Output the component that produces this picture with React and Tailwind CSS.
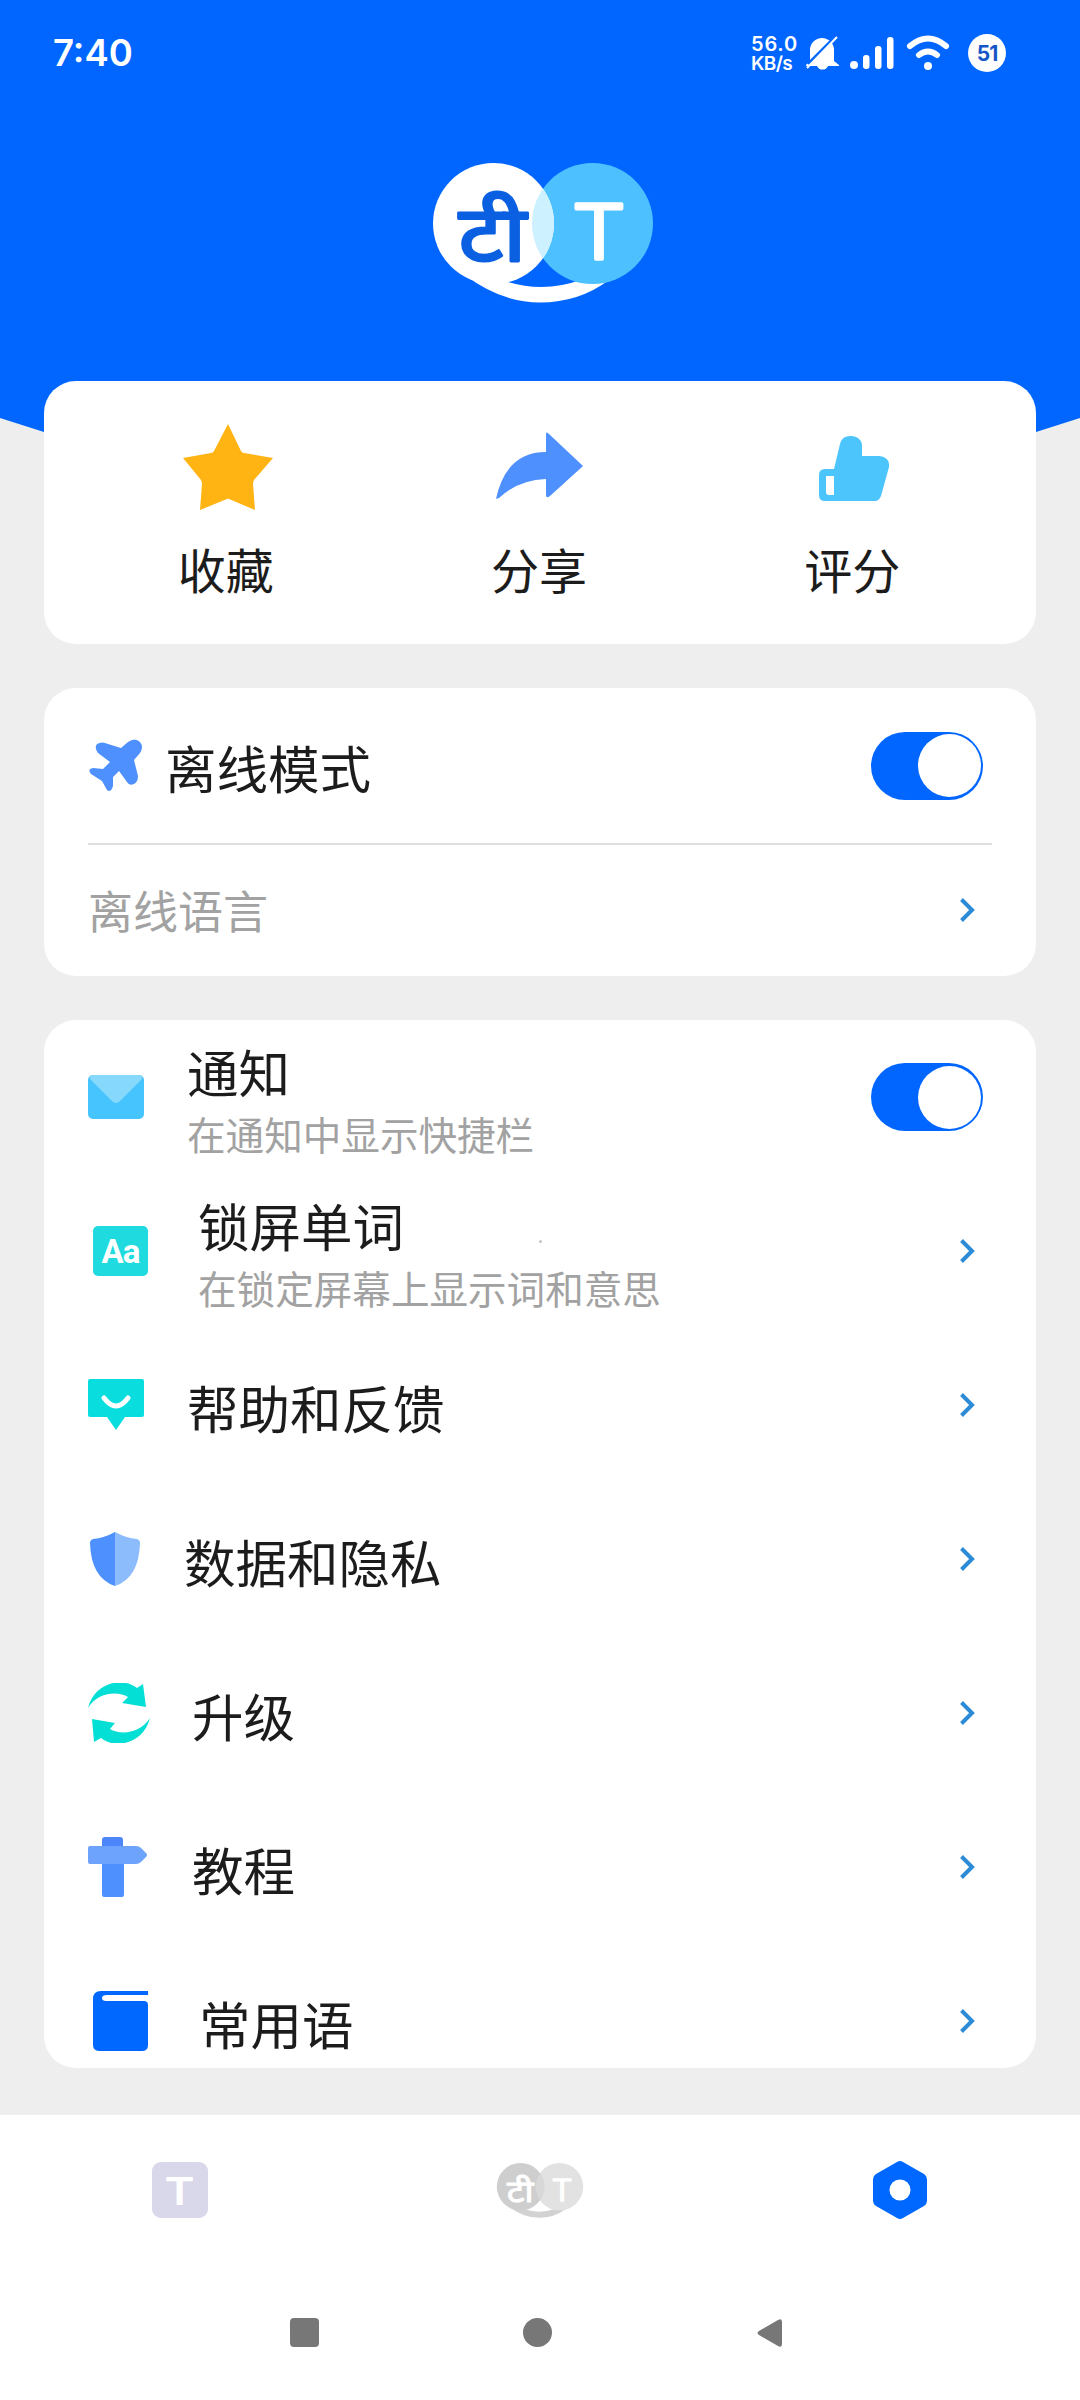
// ============================================================
//  App.jsx — Translator settings screen
//
//  Status bar + brand header, quick actions, offline card,
//  settings list, tab bar and the system navigation.
// ============================================================

import React from "react";

/* ---------- Brand mark ---------- */

/** Shared by the header (colour) and the tab bar (grey). */
function BrandMark({ id, className, left, right, overlap, smile, ink, letter }) {
  return (
    <svg viewBox="0 0 220 140" className={className}>
      <defs>
        <clipPath id={id}>
          <circle cx="159.5" cy="60.5" r="60.5" />
        </clipPath>
      </defs>
      <path d="M32 112Q68 139.500 107 139.500Q146 139.500 176 117L150 116Q108 132 66 116Z" fill={smile} />
      <circle cx="159.5" cy="60.5" r="60.5" fill={right} />
      <circle cx="60.5" cy="60.5" r="60.5" fill={left} />
      <circle cx="60.5" cy="60.5" r="60.5" fill={overlap} clipPath={`url(#${id})`} />
      <text
        transform="translate(59.500 98) scale(1.08 0.94)"
        textAnchor="middle"
        fontSize="82"
        fill={ink}
        stroke={ink}
        strokeWidth="3"
        strokeLinejoin="round"
        className="font-['Noto_Sans','Noto_Sans_Devanagari',sans-serif] font-normal"
      >
        टी
      </text>
      <text
        transform="translate(166 95.500) scale(1.13 1)"
        textAnchor="middle"
        fontSize="75"
        fill={letter}
        stroke={letter}
        strokeWidth="3.5"
        strokeLinejoin="round"
        className="font-['Inter',sans-serif] font-light"
      >
        T
      </text>
    </svg>
  );
}

/* ---------- Status bar ---------- */

function StatusBar() {
  return (
    <div className="flex h-[106px] items-center justify-between pl-[53px] pr-[74px] text-white font-['Inter',sans-serif]">
      <span className="text-[36.500px] font-semibold leading-none">7:40</span>
      <div className="flex items-center">
        <div className="w-[55px] pt-[2px] text-[20px] font-semibold leading-[19px]">
          <div className="tracking-[0.8px]">56.0</div>
          <div className="text-[19px] tracking-[-0.6px]">KB/s</div>
        </div>
        {/* muted bell */}
        <svg viewBox="0 0 34 36" className="h-[36px] w-[34px]">
          <path
            d="M16 3a12 12 0 0 1 12 12v11l5 4v1H22a6 6 0 0 1-11 0H0v-1l4-4V15A12 12 0 0 1 16 3z"
            fill="#fff"
          />
          <path d="M2 29L28 3" stroke="#0066ff" strokeWidth="3" />
          <path d="M1 33L31 2" stroke="#fff" strokeWidth="2" />
        </svg>
        {/* signal */}
        <svg viewBox="0 0 44 32" className="ml-[10px] h-[32px] w-[44px]" fill="#fff">
          <circle cx="4" cy="28" r="4" />
          <rect x="13" y="18" width="6.5" height="14" rx="3" />
          <rect x="25" y="9" width="6.5" height="23" rx="3" />
          <rect x="37" y="0" width="6.5" height="32" rx="3" />
        </svg>
        {/* wifi */}
        <svg viewBox="0 0 44 36" className="ml-[12px] h-[36px] w-[44px]" fill="none" stroke="#fff" strokeWidth="6" strokeLinecap="round">
          <path d="M4 11Q22-4 40 11" />
          <path d="M13 20Q22 13 31 20" />
          <circle cx="22" cy="31" r="4" fill="#fff" stroke="none" />
        </svg>
        <div className="ml-[18px] flex size-[38px] items-center justify-center rounded-full bg-white text-[21px] font-bold leading-none tracking-[-1px] text-[#1456c8]">
          51
        </div>
      </div>
    </div>
  );
}

/* ---------- Quick action icons ---------- */

const StarIcon = () => (
  <svg viewBox="0 0 90 86" className="ml-[2px] mt-[2px] h-[86px] w-[90px]">
    <path
      d="M45 0L58 27Q59 29 61 29L90 34L71 56Q70 58 70 60L72 86L46 75Q45 74 44 75L17 86L19 60Q19 58 18 56L0 34L28 29Q30 29 31 27Z"
      fill="#ffb414"
    />
  </svg>
);

const ShareIcon = () => (
  <svg viewBox="0 0 88 68" className="h-[68px] w-[88px]">
    <path d="M0 67Q10 20 50 20V2Q50-1 53 2L87 34L54 64Q50 67 50 63V47Q22 48 3 66Z" fill="#4d90fe" />
  </svg>
);

const ThumbIcon = () => (
  <svg viewBox="0 0 70 66" className="ml-[2px] mt-[5px] h-[66px] w-[70px]">
    <path
      d="M6 33H15L21 8C23 0 29 0 32 0C38 0 43 4 43 9V20H60Q71 21 70 31L62 60Q60 65 56 65H6Q0 65 0 59V39Q0 33 6 33Z"
      fill="#4cc5fd"
    />
    <path d="M7 40H15V59H10Q7 59 7 56Z" fill="#fff" />
  </svg>
);

/* ---------- Row icons ---------- */

const PlaneIcon = () => (
  <svg viewBox="0 0 54 54" className="h-[54px] w-[54px]">
    <path
      d="M8 5Q13 2 19 5L32 9L39 3Q46-2 51 3Q55 8 51 14L45 21L49 37Q49 43 45 45Q40 47 38 43L30 32L24 38V47Q22 54 18 51L13 42L2 35Q-2 30 4 29L14 30L21 23L9 14Q5 9 8 5Z"
      fill="#4d90fe"
    />
  </svg>
);

const MailIcon = () => (
  <svg viewBox="0 0 56 44" className="h-[44px] w-[56px]">
    <rect width="56" height="44" rx="5" fill="#45c4fe" />
    <path d="M4 0H52Q56 1 53 5L32 26Q28 30 24 26L3 5Q0 1 4 0Z" fill="#86d9fd" />
  </svg>
);

const WordIcon = () => (
  <div className="flex h-[50px] w-[55px] items-center justify-center rounded-[5px] bg-[#1fdbe0] text-[33px] font-bold leading-none tracking-[-1px] text-white font-['Roboto',sans-serif]">
    Aa
  </div>
);

const HelpIcon = () => (
  <svg viewBox="0 0 56 52" className="h-[52px] w-[56px]">
    <path d="M2 0H54Q56 0 56 2V36Q56 38 54 38H37L28 51L19 38H2Q0 38 0 36V2Q0 0 2 0Z" fill="#0addde" />
    <path d="M16 19Q28 35 40 19" fill="none" stroke="#fff" strokeWidth="5" strokeLinecap="round" />
  </svg>
);

const ShieldIcon = () => (
  <svg viewBox="0 0 50 56" className="h-[56px] w-[50px]">
    <path d="M25 1Q14 7 3 8Q0 9 0 12Q1 47 25 55Z" fill="#4d90fe" />
    <path d="M25 1Q36 7 47 8Q50 9 50 12Q49 47 25 55Z" fill="#8dbcfd" />
  </svg>
);

const RefreshIcon = () => (
  <svg viewBox="0 0 62 60" className="h-[60px] w-[62px]" fill="#04dfd5">
    <path d="M0 25C6 0 34-7 49 5L55 1L58 24L34 20L40 14C30 8 10 9 0 25Z" />
    <path d="M62 35C56 60 28 67 13 55L6 59L4 36L27 40L22 46C32 52 52 51 62 35Z" />
  </svg>
);

const SignpostIcon = () => (
  <svg viewBox="0 0 60 60" className="h-[60px] w-[60px]">
    <path d="M17 0H32Q35 0 35 3V10H14V3Q14 0 17 0Z" fill="#4d86fa" />
    <rect x="14" y="20" width="22" height="40" rx="2" fill="#4d90fe" />
    <path d="M2 9H48Q51 9 53 11L58 16Q60 18 58 20L53 25Q51 27 48 27H2Q0 27 0 25V11Q0 9 2 9Z" fill="#6da3fc" />
  </svg>
);

const BookIcon = () => (
  <svg viewBox="0 0 56 60" className="h-[60px] w-[56px]">
    <path d="M8 0H55V4H14Q9 4 9 7Q9 10 13 10H51Q55 10 55 14V54Q55 60 49 60H7Q0 60 0 54V8Q0 0 8 0Z" fill="#0068ff" />
  </svg>
);

/* ---------- Small controls ---------- */

function Toggle() {
  return (
    <div className="mr-[53px] flex h-[68px] w-[112px] shrink-0 items-center justify-end rounded-full bg-[#0066ff] pr-[2px]">
      <div className="size-[63px] rounded-full bg-white" />
    </div>
  );
}

const Chevron = () => (
  <svg viewBox="0 0 16 26" className="mr-[61px] h-[26px] w-[16px] shrink-0">
    <path d="M2.500 2.500L13 13L2.500 23.500" fill="none" stroke="#2b8bd6" strokeWidth="4" />
  </svg>
);

/* ---------- Settings data ---------- */

const ACTIONS = [
  { label: "收藏", Icon: StarIcon },
  { label: "分享", Icon: ShareIcon },
  { label: "评分", Icon: ThumbIcon },
];

// slot: left inset + width reserved for the icon, differs per row
const ROWS = [
  { title: "通知", sub: "在通知中显示快捷栏", Icon: MailIcon, slot: "w-[99px]", toggle: true },
  { title: "锁屏单词", sub: "在锁定屏幕上显示词和意思", Icon: WordIcon, slot: "w-[110px] pl-[5px]", dot: true },
  { title: "帮助和反馈", Icon: HelpIcon, slot: "w-[99px]" },
  { title: "数据和隐私", Icon: ShieldIcon, slot: "w-[96px] pl-[2px]" },
  { title: "升级", Icon: RefreshIcon, slot: "w-[104px]" },
  { title: "教程", Icon: SignpostIcon, slot: "w-[104px]" },
  { title: "常用语", Icon: BookIcon, slot: "w-[111px] pl-[5px]" },
];

function SettingRow({ title, sub, Icon, slot, toggle, dot }) {
  return (
    <div className="relative flex h-[154px] shrink-0 items-center pl-[44px]">
      <div className={`${slot} shrink-0`}>
        <Icon />
      </div>
      <div className={sub ? "flex-1 pt-[5px]" : "flex-1 pt-[3px]"}>
        <div className="text-[51.500px] leading-[68px]">{title}</div>
        {sub && <div className="text-[38.600px] leading-[57px] text-[#a2a2a2]">{sub}</div>}
      </div>
      {dot && <span className="absolute left-[495px] top-[66px] size-[3px] rounded-full bg-[#c4c4c4]" />}
      {toggle ? <Toggle /> : <Chevron />}
    </div>
  );
}

/* ---------- Page ---------- */

export default function App() {
  return (
    <div className="flex h-[2400px] w-[1080px] flex-col overflow-hidden bg-[#eeeeee] text-[#1c1c1c] font-['Noto_Sans_CJK_SC',sans-serif]">
      {/* Header */}
      <header className="h-[432px] shrink-0 bg-[#0066ff] [clip-path:polygon(0_0,100%_0,100%_418px,1036px_432px,44px_432px,0_418px)]">
        <StatusBar />
        <BrandMark
          id="brand"
          className="ml-[433px] mt-[57px] h-[140px] w-[220px]"
          left="#ffffff"
          right="#4dc1ff"
          overlap="#cdf1ff"
          smile="#ffffff"
          ink="#0a60e0"
          letter="#ffffff"
        />
      </header>

      <main className="relative -mt-[51px] flex shrink-0 flex-col px-[44px]">
        {/* Quick actions */}
        <section className="grid h-[263px] grid-cols-3 rounded-[32px] bg-white px-[26px]">
          {ACTIONS.map(({ label, Icon }) => (
            <div key={label} className="flex flex-col items-center">
              <div className="mt-[35px] flex h-[100px] items-center">
                <Icon />
              </div>
              <span className="mt-[17px] mr-[2px] text-[48px] leading-[70px]">{label}</span>
            </div>
          ))}
        </section>

        {/* Offline mode */}
        <section className="mt-[44px] h-[288px] rounded-[32px] bg-white">
          <div className="flex h-[155px] items-center pl-[45px]">
            <PlaneIcon />
            <span className="ml-[22px] flex-1 pt-[2px] text-[51.500px] leading-[68px]">离线模式</span>
            <Toggle />
          </div>
          <div className="ml-[44px] h-[2px] w-[904px] bg-[#dedede]" />
          <div className="flex h-[130px] items-center pl-[44px]">
            <span className="flex-1 text-[45px] leading-[60px] text-[#a2a2a2]">离线语言</span>
            <Chevron />
          </div>
        </section>

        {/* Settings list, last row runs under the card edge */}
        <section className="mt-[44px] flex h-[1048px] flex-col overflow-hidden rounded-[32px] bg-white">
          {ROWS.map((row) => (
            <SettingRow key={row.title} {...row} />
          ))}
        </section>
      </main>

      {/* Tab bar */}
      <nav className="mt-[47px] grid h-[150px] shrink-0 grid-cols-3 items-center justify-items-center bg-white">
        <div className="flex size-[56px] items-center justify-center rounded-[9px] bg-[#d9d7ea] text-white font-['Inter',sans-serif]">
          <span className="scale-x-[1.2] pt-[2px] text-[38px] font-semibold leading-none">T</span>
        </div>
        <BrandMark
          id="brand-tab"
          className="h-[55px] w-[88px]"
          left="#cecece"
          right="#e2e2e2"
          overlap="#d8d8d8"
          smile="#d2d2d2"
          ink="#ffffff"
          letter="#ffffff"
        />
        <svg viewBox="0 0 54 60" className="h-[60px] w-[54px]">
          <path
            d="M24 2Q27 0 30 2L51 14Q54 16 54 19V41Q54 44 51 46L30 58Q27 60 24 58L3 46Q0 44 0 41V19Q0 16 3 14Z"
            fill="#0068ff"
          />
          <circle cx="27" cy="30" r="10.500" fill="#fff" />
        </svg>
      </nav>

      {/* System navigation */}
      <div className="flex h-[135px] shrink-0 items-center bg-white pl-[290px]">
        <div className="size-[29px] rounded-[4px] bg-[#777777]" />
        <div className="ml-[204px] size-[29px] rounded-full bg-[#777777]" />
        <svg viewBox="0 0 25 28" className="ml-[205px] h-[28px] w-[25px]">
          <path d="M21 1Q25-1 25 3V25Q25 29 21 27L2 16Q-1 14 2 12Z" fill="#777777" />
        </svg>
      </div>
    </div>
  );
}
